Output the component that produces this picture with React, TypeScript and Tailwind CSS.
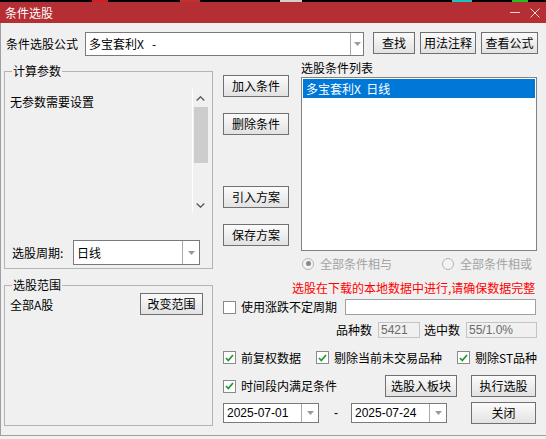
import React from "react";

const btn =
  "flex items-center justify-center border border-[#707070] bg-linear-to-b from-[#fbfbfb] to-[#e2e2e2] text-black";

function Button({ text, className }: { text: string; className: string }) {
  return <div className={`${btn} ${className}`}>{text}</div>;
}

function Arrow() {
  return (
    <svg width="7" height="4" viewBox="0 0 7 4">
      <path d="M0 0h7L3.5 4z" fill="#9a9a9a" />
    </svg>
  );
}

function Combo({
  text,
  className,
  btnWidth,
  mono,
}: {
  text: string;
  className: string;
  btnWidth: string;
  mono?: boolean;
}) {
  return (
    <div className={`flex border border-[#7a7a7a] bg-white ${className}`}>
      <div
        className={`flex-1 flex items-center pl-[3px] whitespace-pre ${
          mono ? "font-['Liberation_Sans',sans-serif]" : ""
        }`}
      >
        {text}
      </div>
      <div
        className={`flex items-center justify-center border-l border-[#a8a8a8] ${btnWidth}`}
      >
        <Arrow />
      </div>
    </div>
  );
}

function Check({ checked = true }: { checked?: boolean }) {
  return (
    <div className="w-[13px] h-[13px] border border-[#8a8a8a] bg-white flex items-center justify-center shrink-0">
      {checked && (
        <svg width="9" height="8" viewBox="0 0 9 8">
          <path
            d="M1 4l2.3 2.5L8 1"
            stroke="#1f9a2a"
            strokeWidth="1.8"
            fill="none"
          />
        </svg>
      )}
    </div>
  );
}

function CheckItem({ text, checked }: { text: string; checked?: boolean }) {
  return (
    <div className="flex items-center">
      <Check checked={checked} />
      <span className="ml-[5px] whitespace-nowrap">{text}</span>
    </div>
  );
}

function Radio({ on }: { on?: boolean }) {
  return (
    <div className="w-[12px] h-[12px] rounded-full border border-[#b5b5b5] bg-[#f4f4f4] flex items-center justify-center">
      {on && <div className="w-[5px] h-[5px] rounded-full bg-[#8a8a8a]" />}
    </div>
  );
}

function Group({
  title,
  className,
  children,
}: {
  title: string;
  className: string;
  children: React.ReactNode;
}) {
  return (
    <div className={`relative border border-[#b4b4b4] ${className}`}>
      <span className="absolute left-[7px] -top-[7px] px-[1px] bg-[#f0f0f0] leading-[12px]">
        {title}
      </span>
      {children}
    </div>
  );
}

export default function App() {
  return (
    <div className="w-[546px] h-[439px] bg-[#f0f0f0] flex flex-col text-[12px] leading-[12px] text-black font-['Noto_Sans_CJK_SC','Noto_Sans',sans-serif] overflow-hidden">
      <div className="h-[2px] bg-black flex shrink-0">
        <div className="ml-[92px] w-[16px] bg-[#d02020]" />
        <div className="ml-[72px] w-[20px] bg-[#c03030]" />
        <div className="ml-[80px] w-[22px] bg-[#d0d0d0]" />
        <div className="ml-[150px] w-[20px] bg-[#20c0c0]" />
        <div className="ml-[40px] w-[16px] bg-[#20c020]" />
      </div>
      <div className="h-[21px] bg-[#b42e33] flex items-center pl-[5px] text-white shrink-0">
        <span>条件选股</span>
        <div className="ml-auto flex items-center">
          <div className="w-[10px] h-[1px] bg-[#f3d4d4]" />
          <svg className="ml-[10px] mr-[6px]" width="10" height="10" viewBox="0 0 10 10">
            <path d="M0.5 0.5l9 9M9.5 0.5l-9 9" stroke="#f3d4d4" strokeWidth="1" />
          </svg>
        </div>
      </div>

      <div className="h-[413px] border-l border-b border-[#a0a0a0] flex flex-col shrink-0">
        {/* formula row */}
        <div className="flex items-start mt-[9px] pl-[5px]">
          <span className="w-[79px] mt-[6px]">条件选股公式</span>
          <Combo
            text={"多宝套利X   -"}
            className="w-[279px] h-[24px]"
            btnWidth="w-[13px]"
          />
          <Button text="查找" className="ml-[9px] w-[42px] h-[22px]" />
          <Button text="用法注释" className="ml-[5px] w-[56px] h-[22px]" />
          <Button text="查看公式" className="ml-[5px] w-[57px] h-[22px]" />
        </div>

        <div className="flex mt-[6px]">
          {/* left column */}
          <div className="ml-[3px] w-[209px] flex flex-col">
            <Group title="计算参数" className="mt-[9px] h-[198px] flex flex-col">
              <div className="flex mt-[17px] h-[124px]">
                <div className="flex-1 pl-[5px] pt-[7px]">无参数需要设置</div>
                <div className="w-[16px] mr-[4px] border-l border-white flex flex-col items-center">
                  <svg className="mt-[7px]" width="9" height="5" viewBox="0 0 9 5">
                    <path d="M0.7 4.5L4.5 0.8l3.8 3.7" stroke="#555" strokeWidth="1.3" fill="none" />
                  </svg>
                  <div className="mt-[6px] w-[14px] h-[56px] bg-[#cdcdcd]" />
                  <svg className="mt-auto mb-[5px]" width="9" height="5" viewBox="0 0 9 5">
                    <path d="M0.7 0.5L4.5 4.2l3.8-3.7" stroke="#555" strokeWidth="1.3" fill="none" />
                  </svg>
                </div>
              </div>
              <div className="flex items-center mt-[27px]">
                <span className="w-[68px] pl-[7px]">选股周期:</span>
                <Combo text="日线" className="w-[127px] h-[25px]" btnWidth="w-[17px]" />
              </div>
            </Group>
            <Group title="选股范围" className="mt-[16px] h-[141px]">
              <div className="flex items-start pt-[7px]">
                <span className="pl-[5px] mt-[6px]">全部A股</span>
                <Button text="改变范围" className="ml-auto mr-[9px] w-[63px] h-[22px]" />
              </div>
            </Group>
          </div>

          {/* right area */}
          <div className="ml-[10px] w-[314px] flex flex-col">
            <div className="flex h-[189px]">
              <div className="w-[66px] flex flex-col">
                <Button text="加入条件" className="mt-[13px] h-[22px]" />
                <Button text="删除条件" className="mt-[16px] h-[22px]" />
                <Button text="引入方案" className="mt-[51px] h-[22px]" />
                <Button text="保存方案" className="mt-[16px] h-[22px]" />
              </div>
              <div className="ml-[12px] w-[236px] flex flex-col">
                <span>选股条件列表</span>
                <div className="mt-[3px] h-[174px] border border-[#828282] bg-white p-[1px]">
                  <div className="h-[19px] bg-[#0078d7] text-white flex items-center pl-[3px] whitespace-pre">
                    {"多宝套利X  日线"}
                  </div>
                </div>
              </div>
            </div>

            <div className="flex items-center mt-[6px] h-[13px] text-[#a3a3a3]">
              <div className="ml-[79px]">
                <Radio on />
              </div>
              <span className="ml-[6px]">全部条件相与</span>
              <div className="ml-[50px]">
                <Radio />
              </div>
              <span className="ml-[6px]">全部条件相或</span>
            </div>

            <div className="mt-[12px] ml-[69px] text-[#ff0000] whitespace-nowrap">
              选股在下载的本地数据中进行,请确保数据完整
            </div>

            <div className="flex items-center mt-[5px] h-[16px]">
              <CheckItem text="使用涨跌不定周期" checked={false} />
              <div className="ml-auto mr-[1px] w-[191px] h-[16px] border border-[#a0a0a0] bg-white" />
            </div>

            <div className="flex items-center justify-end mt-[7px] h-[16px]">
              <span>品种数</span>
              <div className="ml-[6px] w-[42px] h-[16px] border border-[#c4c4c4] bg-[#f0f0f0] text-[#6a6a6a] flex items-center pl-[2px] font-['Liberation_Sans',sans-serif]">
                5421
              </div>
              <span className="ml-[4px]">选中数</span>
              <div className="ml-[6px] w-[71px] h-[16px] border border-[#c4c4c4] bg-[#f0f0f0] text-[#6a6a6a] flex items-center pl-[2px] font-['Liberation_Sans',sans-serif]">
                55/1.0%
              </div>
            </div>

            <div className="flex items-center mt-[13px] h-[13px]">
              <CheckItem text="前复权数据" />
              <div className="ml-[15px]">
                <CheckItem text="剔除当前未交易品种" />
              </div>
              <div className="ml-[15px]">
                <CheckItem text="剔除ST品种" />
              </div>
            </div>

            <div className="flex items-center mt-[11px] h-[22px]">
              <CheckItem text="时间段内满足条件" />
              <Button text="选股入板块" className="ml-[48px] w-[72px] h-[22px]" />
              <Button text="执行选股" className="ml-[14px] w-[65px] h-[22px]" />
            </div>

            <div className="flex items-center mt-[5px] h-[22px]">
              <Combo text="2025-07-01" className="w-[96px] h-[20px]" btnWidth="w-[17px]" mono />
              <span className="ml-[15px] w-[17px] font-['Liberation_Sans',sans-serif]">-</span>
              <Combo text="2025-07-24" className="w-[96px] h-[20px]" btnWidth="w-[17px]" mono />
              <Button text="关闭" className="ml-[24px] w-[65px] h-[22px]" />
            </div>
          </div>
        </div>
      </div>
    </div>
  );
}
